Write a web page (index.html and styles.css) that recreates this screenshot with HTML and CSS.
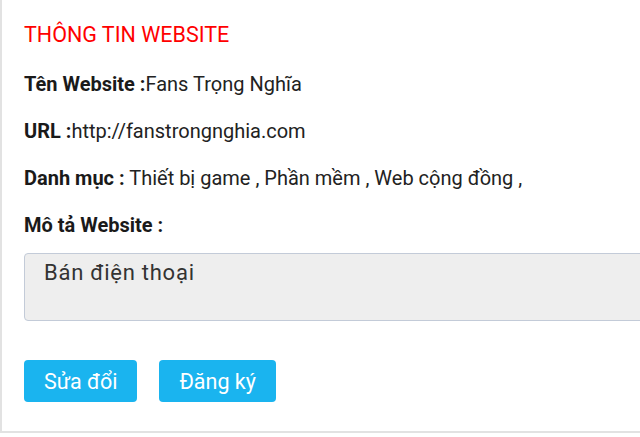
FILE: index.html
```html
<!DOCTYPE html>
<html>
<head>
    <meta charset="utf-8" />
    <link rel="stylesheet" href="styles.css">
</head>
<body>
    <div class="panel">
        <h2 class="panel_title">THÔNG TIN WEBSITE</h2>
        <div class="info_list">
            <p class="info_row"><b>Tên Website :</b>Fans Trọng Nghĩa</p>
            <p class="info_row"><b>URL :</b>http://fanstrongnghia.com</p>
            <p class="info_row"><b>Danh mục :</b> Thiết bị game , Phần mềm , Web cộng đồng ,</p>
            <p class="info_row"><b>Mô tả Website :</b></p>
        </div>
        <textarea class="desc_box" readonly>Bán điện thoại</textarea>
        <div class="btn_row">
            <button class="btn">Sửa đổi</button>
            <button class="btn">Đăng ký</button>
        </div>
    </div>
</body>
</html>
```

FILE: styles.css
```css
*{
    padding: 0;
    margin: 0;
    box-sizing: border-box;
}
body{
    background-color: #fff;
    overflow: hidden;
    font-family: Roboto, "Liberation Sans", sans-serif;
    color: #222;
}

.panel{
    width: 700px;
    padding: 22px 0 29px 22px;
    border-left: 2px solid #e2e2e2;
    border-bottom: 2px solid #e2e2e2;
}
.panel_title{
    font-size: 21.5px;
    font-weight: 400;
    line-height: 26px;
    color: #ff0000;
}

.info_list{
    display: flex;
    flex-direction: column;
    gap: 21px;
    margin-top: 23px;
}
.info_row{
    font-size: 20px;
    line-height: 26px;
}
.info_row b{
    font-weight: 700;
    color: #1a1a1a;
}

.desc_box{
    display: block;
    width: 100%;
    height: 68px;
    margin-top: 15px;
    padding: 6px 19px;
    border: 1px solid #c3cbd8;
    border-radius: 4px;
    background-color: #eeeeee;
    color: #333;
    font-family: Roboto, "Liberation Sans", sans-serif;
    font-size: 22px;
    letter-spacing: 0.75px;
    line-height: 26px;
    resize: none;
    outline: none;
}

.btn_row{
    display: flex;
    gap: 22px;
    margin-top: 39px;
}
.btn{
    height: 42px;
    padding: 0 20px;
    border: none;
    border-radius: 4px;
    background-color: #1ab4ef;
    color: #fff;
    font-family: Roboto, "Liberation Sans", sans-serif;
    font-size: 21.5px;
    cursor: pointer;
}
```
